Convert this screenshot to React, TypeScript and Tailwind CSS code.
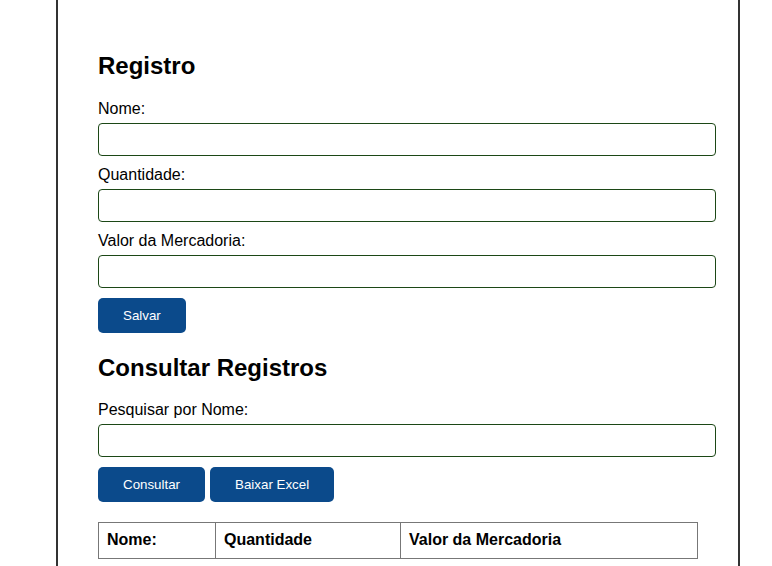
import React from "react";

const App = () => {
  const inputClass = "block h-[33px] w-[618px] rounded-[4px] border border-[#1c4716] px-2 text-[13.33px] outline-none";
  const labelClass = "mb-[5px] block text-[16px] leading-[18px]";
  const buttonClass = "h-[35px] rounded-[5px] bg-[#0b4a8b] px-[25px] text-[13.33px] leading-[15px] text-white";

  const fields = ["Nome:", "Quantidade:", "Valor da Mercadoria:"];

  return (
    <div className="min-h-screen bg-white font-['Liberation_Sans',Arial,sans-serif] text-black">
      <div className="ml-[56px] min-h-[566px] w-[684px] border-x-2 border-[#333] px-[40px] pt-[32px] pb-10">
        <h2 className="my-[20px] text-[24px] leading-[27.6px] font-bold">Registro</h2>
        {fields.map((f) => (
          <div key={f}>
            <label className={labelClass}>{f}</label>
            <input type="text" className={`${inputClass} mb-[10px]`} />
          </div>
        ))}
        <button className={buttonClass}>Salvar</button>

        <h2 className="mt-[21px] mb-[20px] text-[24px] leading-[27.6px] font-bold">Consultar Registros</h2>
        <label className={labelClass}>Pesquisar por Nome:</label>
        <input type="text" className={`${inputClass} mb-[10px]`} />
        <div className="flex gap-[5px]">
          <button className={buttonClass}>Consultar</button>
          <button className={buttonClass}>Baixar Excel</button>
        </div>

        <table className="mt-[20px] w-[600px] table-fixed border-collapse border border-[#777]">
          <thead>
            <tr>
              <th className="w-[117px] border border-[#777] p-2 text-left text-[16px] leading-[18.4px] font-bold">Nome:</th>
              <th className="w-[185px] border border-[#777] p-2 text-left text-[16px] leading-[18.4px] font-bold">Quantidade</th>
              <th className="border border-[#777] p-2 text-left text-[16px] leading-[18.4px] font-bold">Valor da Mercadoria</th>
            </tr>
          </thead>
          <tbody></tbody>
        </table>
      </div>
    </div>
  );
};

export default App;
